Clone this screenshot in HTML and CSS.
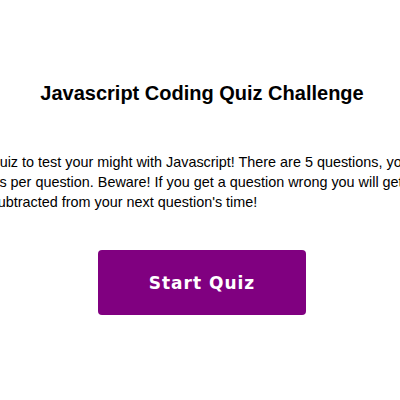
FILE: index.html
```html
<!DOCTYPE html>
<html>
<head>
<meta charset="utf-8">
<link rel="stylesheet" href="styles.css">
</head>
<body>
<main class="intro">
  <h1 class="title">Javascript Coding Quiz Challenge</h1>
  <p class="rules">Try this quiz to test your might with Javascript! There are 5 questions, you have 15 seconds per question. Beware! If you get a question wrong you will get 10 seconds subtracted from your next question's time!</p>
  <button class="start">Start Quiz</button>
</main>
</body>
</html>
```
FILE: styles.css
```css
html, body {
  margin: 0;
  padding: 0;
  background: #fff;
  overflow: hidden;
}
.intro {
  box-sizing: border-box;
  width: 400px;
  padding: 82px 0 0 4px;
  display: flex;
  flex-direction: column;
  align-items: center;
  font-family: "Liberation Sans", Arial, sans-serif;
  color: #000;
}
.title {
  margin: 0;
  font-size: 20px;
  font-weight: bold;
  line-height: 23px;
}
.rules {
  flex: none;
  width: 526px;
  margin: 47px 0 0 -12px;
  font-size: 14.4px;
  line-height: 20px;
  text-indent: 8px;
  text-align: left;
}
.start {
  margin-top: 38px;
  width: 208px;
  height: 65px;
  border: none;
  border-radius: 4px;
  background: #800080;
  color: #fff;
  font-family: Verdana, "DejaVu Sans", sans-serif;
  font-weight: bold;
  font-size: 17px;
  letter-spacing: 1px;
}
```
